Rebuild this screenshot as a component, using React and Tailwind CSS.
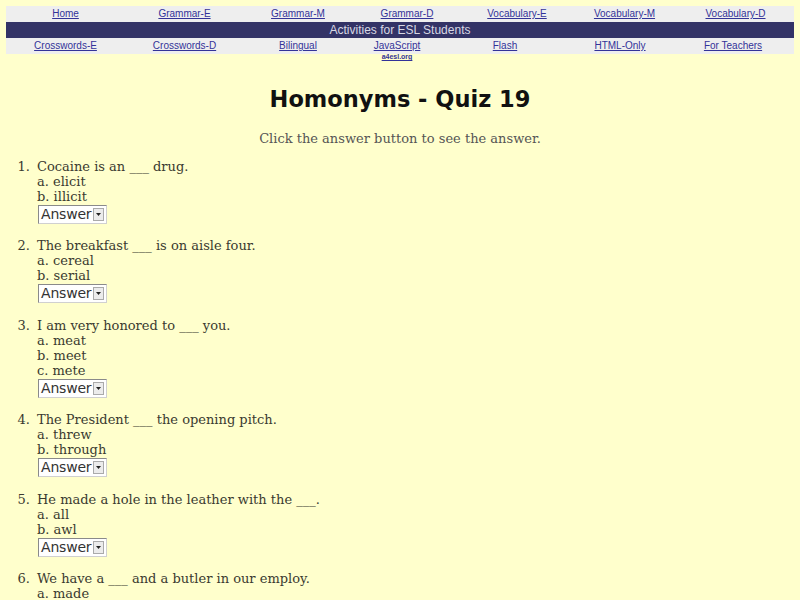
const row1 = [
  { label: 'Home', w: 'w-[119px]' },
  { label: 'Grammar-E', w: 'w-[119px]' },
  { label: 'Grammar-M', w: 'w-[108px]' },
  { label: 'Grammar-D', w: 'w-[110px]' },
  { label: 'Vocabulary-E', w: 'w-[110px]' },
  { label: 'Vocabulary-M', w: 'w-[105px]' },
  { label: 'Vocabulary-D', w: 'flex-1' },
];

const row2 = [
  { label: 'Crosswords-E', w: 'w-[119px]' },
  { label: 'Crosswords-D', w: 'w-[119px]' },
  { label: 'Bilingual', w: 'w-[108px]' },
  { label: 'JavaScript', w: 'w-[90px]', sub: 'a4esl.org' },
  { label: 'Flash', w: 'w-[126px]' },
  { label: 'HTML-Only', w: 'w-[104px]' },
  { label: 'For Teachers', w: 'flex-1' },
];

const questions = [
  { q: 'Cocaine is an ___ drug.', opts: ['a. elicit', 'b. illicit'] },
  { q: 'The breakfast ___ is on aisle four.', opts: ['a. cereal', 'b. serial'] },
  { q: 'I am very honored to ___ you.', opts: ['a. meat', 'b. meet', 'c. mete'] },
  { q: 'The President ___ the opening pitch.', opts: ['a. threw', 'b. through'] },
  { q: 'He made a hole in the leather with the ___.', opts: ['a. all', 'b. awl'] },
  { q: 'We have a ___ and a butler in our employ.', opts: ['a. made', 'b. maid'] },
];

function AnswerSelect() {
  return (
    <div className="flex items-stretch w-[69px] h-[19px] bg-white border border-[#8a8a8a] border-r-[#d0d0d0] border-b-[#d0d0d0] font-['DejaVu_Sans',sans-serif] text-[14px] leading-[17px] text-[#333]">
      <span className="pl-[2px] flex-1 tracking-[-0.2px]">Answer</span>
      <span className="my-[2px] mr-[2px] w-[11px] bg-[#ececec] border border-[#aaa] flex items-center justify-center">
        <svg width="5" height="3" viewBox="0 0 5 3"><path d="M0 0h5L2.5 3z" fill="#222" /></svg>
      </span>
    </div>
  );
}

function NavRow({ items }) {
  return (
    <div className="flex h-[16px] bg-[#eeeeee] font-['Liberation_Sans',Arial,sans-serif] text-[10px] leading-[16px]">
      {items.map((it) => (
        <div key={it.label} className={`${it.w} relative text-center`}>
          <a href="#" className="text-[#333399] underline">{it.label}</a>
          {it.sub && (
            <div className="absolute left-0 right-0 top-[15px] text-center text-[7px] leading-[8px] font-bold">
              <a href="#" className="text-[#333399] underline">{it.sub}</a>
            </div>
          )}
        </div>
      ))}
    </div>
  );
}

export default function App() {
  return (
    <div className="w-[800px] h-[600px] overflow-hidden bg-[#ffffcc] text-[#3a3a30]">
      {/* nav */}
      <div className="px-[6px] pt-[6px]">
        <NavRow items={row1} />
        <div className="h-[16px] bg-[#333366] text-[#d8d8e4] text-center font-['Liberation_Sans',Arial,sans-serif] text-[12px] leading-[16px]">
          Activities for ESL Students
        </div>
        <NavRow items={row2} />
      </div>

      <h1 className="mt-[30px] text-center font-['Comic_Sans_MS','DejaVu_Sans',sans-serif] font-bold text-[22.5px] leading-[30px] text-[#111]">
        Homonyms - Quiz 19
      </h1>

      <p className="mt-[17px] text-center font-['DejaVu_Serif',serif] text-[13px] leading-[16px] text-[#555]">
        Click the answer button to see the answer.
      </p>

      <ol className="mt-[12px] font-['DejaVu_Serif',serif] text-[13px] leading-[15px]">
        {questions.map((item, i) => (
          <li key={i} className="flex mb-[14.4px]">
            <span className="w-[37px] text-right pr-[7px] shrink-0">{i + 1}.</span>
            <div className="flex flex-col">
              <span>{item.q}</span>
              {item.opts.map((o) => (
                <span key={o}>{o}</span>
              ))}
              <div className="mt-[1px] ml-[1px]">
                <AnswerSelect />
              </div>
            </div>
          </li>
        ))}
      </ol>
    </div>
  );
}
